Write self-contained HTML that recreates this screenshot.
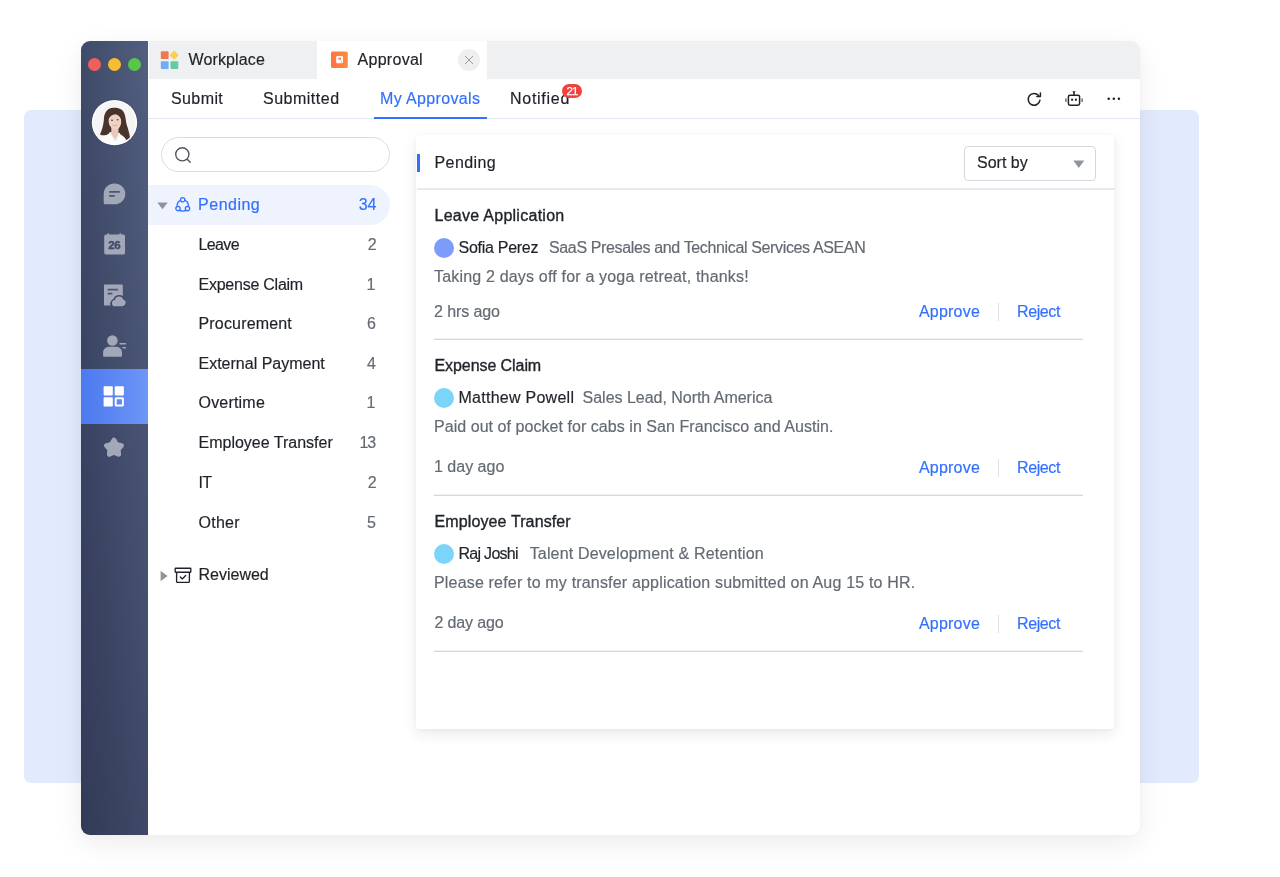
<!DOCTYPE html>
<html lang="en">
<head>
<meta charset="utf-8">
<title>Approval</title>
<style>
*{box-sizing:border-box;margin:0;padding:0}
html,body{width:1280px;height:877px;overflow:hidden;background:#fff}
body{position:relative;font-family:"Liberation Sans",sans-serif;font-size:16px;color:#1f2329;-webkit-font-smoothing:antialiased}
.abs{position:absolute}
.t{-webkit-text-stroke:.18px;position:absolute;white-space:nowrap;line-height:20px;height:20px}
#bg{left:24px;top:110px;width:1175px;height:673px;background:#e2eafe;border-radius:7px}
#win{will-change:transform;left:81px;top:41px;width:1059px;height:794px;background:#fff;border-radius:9px;box-shadow:0 9px 28px rgba(0,0,0,.075),0 0 8px rgba(0,0,0,.03);overflow:hidden}
#side{left:0;top:0;width:66.5px;height:794px;background:linear-gradient(180deg,rgba(19,24,48,0),rgba(19,24,48,.31)),linear-gradient(90deg,#3f4a69 0%,#535f80 100%)}
#tabs{left:67.5px;top:0;width:992px;height:38px;background:#eff0f1}
#tabact{left:236px;top:0;width:170px;height:38px;background:#fff}
#nav{left:66.5px;top:38px;width:993px;height:40px;background:#fff;border-bottom:1.5px solid #e3e6f0}
.r{text-align:right}
.m{-webkit-text-stroke:.36px}
.gray{color:#646a73}
.blue{color:#3370ff}
</style>
</head>
<body>
<div id="bg" class="abs"></div>
<div id="win" class="abs">
  <div id="side" class="abs">
    <div class="abs" style="left:7px;top:17px;width:13px;height:13px;border-radius:50%;background:#ee6059"></div>
    <div class="abs" style="left:27px;top:17px;width:13px;height:13px;border-radius:50%;background:#f6bd33"></div>
    <div class="abs" style="left:46.5px;top:17px;width:13px;height:13px;border-radius:50%;background:#58c649"></div>
    <svg class="abs" style="left:10px;top:58px" width="47" height="47" viewBox="0 0 47 47">
      <defs><clipPath id="avc"><circle cx="23.500" cy="23.600" r="21.300"/></clipPath></defs>
      <circle cx="23.500" cy="23.600" r="23.300" fill="#38425f" opacity=".55"/>
      <circle cx="23.500" cy="23.600" r="22.700" fill="#fff"/>
      <circle cx="23.500" cy="23.600" r="21.300" fill="#f5f5f6"/>
      <g clip-path="url(#avc)">
        <path d="M23 8.800C17 8.500 13.500 13 13 19c-.3 5-1 8-2 11-.7 2.500-1.500 4-2 5.500 2 1 5 1.300 8 0l2-2.500 10 1c.5 4 2 6.500 4 8 2.500-.5 4.500-1.500 6-3-.5-5-2-9-3.500-14-1-5-1-11-4.500-14-2-1.700-5-2.200-8-2.200z" fill="#49332a"/>
        <path d="M20.300 27h7.200v7.500l-3.300 6.500-3.900-6z" fill="#e9c8b8"/>
        <path d="M7 47c1-7 6.500-10.500 12.500-12.500l5 7.500 4-7c4.500 2 7.500 5 8.500 12z" fill="#fcfcfc"/>
        <path d="M19.500 34.500l5 7.500 4-7" fill="none" stroke="#e4e4e6" stroke-width=".7"/>
        <ellipse cx="23.900" cy="22.300" rx="6.300" ry="8.300" fill="#efd2c4" transform="rotate(-6 23.900 22.300)"/>
        <path d="M17 20.500c.5-5.500 3.500-8.300 7-8 4 .3 6.800 3.500 6.800 9-1.300-3.300-3.300-5.800-6.300-6.300-3.300 0-5.700 2.300-7.500 5.300z" fill="#49332a"/>
        <ellipse cx="21" cy="21.200" rx="1.100" ry=".7" fill="#4b362f" opacity=".85"/>
        <ellipse cx="26.600" cy="20.700" rx="1.100" ry=".7" fill="#4b362f" opacity=".85"/>
        <path d="M20.900 25.600q3.200 1.600 6-.6-2.400 4-6 .6z" fill="#c4837a"/>
        <path d="M21.800 26q2.300.8 4.300-.3-2 1.600-4.300.3z" fill="#fff"/>
      </g>
    </svg>
    <!-- chat -->
    <svg class="abs" style="left:22px;top:141.500px" width="23" height="22" viewBox="0 0 23 22">
      <path d="M11.500 0.500C17.500 0.500 22.300 5.100 22.300 10.900S17.500 21.300 11.500 21.300H2.200C1.400 21.300 0.700 20.700 0.700 19.800V10.900C0.700 5.100 5.500 0.500 11.500 0.500Z" fill="#a2a8b8"/>
      <rect x="6" y="8" width="11" height="1.800" rx=".9" fill="#4a5674"/>
      <rect x="6" y="12" width="6" height="1.800" rx=".9" fill="#4a5674"/>
    </svg>
    <!-- calendar -->
    <svg class="abs" style="left:21.800px;top:192px" width="22" height="22" viewBox="0 0 22 22">
      <path d="M4.500 0.200h1.600v1.400h10.400V0.200h1.600v1.400h2c1.100 0 2 .9 2 2v16c0 1.100-.9 2-2 2H3.200c-1.100 0-2-.9-2-2V3.600c0-1.100.9-2 2-2h1.300z" fill="#a2a8b8"/>
      <text x="11.300" y="16" text-anchor="middle" style="font-family:'Liberation Sans',sans-serif;font-weight:700;font-size:11.500px;letter-spacing:-.3px" fill="#414c69" stroke="#414c69" stroke-width=".35">26</text>
    </svg>
    <!-- doc cloud -->
    <svg class="abs" style="left:21.500px;top:242.500px" width="23" height="23" viewBox="0 0 23 23">
      <path d="M2 0.500h16.800c.6 0 1 .4 1 1v11.400a5.600 5.600 0 0 0-9 3.100 4 4 0 0 0-3.300 5.500H2c-.6 0-1-.4-1-1V1.500c0-.6.4-1 1-1z" fill="#a2a8b8"/>
      <rect x="4.600" y="4.700" width="10.500" height="1.800" rx=".5" fill="#4a5674"/>
      <rect x="4.600" y="8.700" width="4.800" height="1.800" rx=".5" fill="#4a5674"/>
      <path d="M12.300 22.300a3.100 3.100 0 0 1-.4-6.200 4.300 4.300 0 0 1 8.300-.6 3.500 3.500 0 0 1-.5 6.800z" fill="#a2a8b8" stroke="#414c69" stroke-width="3" paint-order="stroke"/>
    </svg>
    <!-- contact -->
    <svg class="abs" style="left:20.800px;top:292.800px" width="26" height="24" viewBox="0 0 26 24">
      <circle cx="10.400" cy="6.450" r="5.250" fill="#a2a8b8"/>
      <path d="M1.100 21.800v-3.300c0-3.300 2.600-5.800 5.900-5.800h7.100c3.300 0 5.900 2.500 5.900 5.800v3.300c0 .5-.4.900-.9.900H2c-.5 0-.9-.4-.9-.9z" fill="#a2a8b8"/>
      <rect x="17.300" y="9" width="6.800" height="1.500" rx=".7" fill="#a2a8b8"/>
      <rect x="20.300" y="12.900" width="3.800" height="1.500" rx=".7" fill="#a2a8b8"/>
    </svg>
    <!-- active -->
    <div class="abs" style="left:0;top:328px;width:66.500px;height:55px;background:linear-gradient(90deg,#4b79ef,#6e96f6)"></div>
    <svg class="abs" style="left:21.900px;top:345px" width="22" height="21" viewBox="0 0 22 21">
      <rect x=".6" y=".2" width="9.200" height="9.200" rx=".8" fill="#fff"/>
      <rect x="11.700" y=".2" width="9.200" height="9.200" rx=".8" fill="#fff"/>
      <rect x=".6" y="11.300" width="9.200" height="9.200" rx=".8" fill="#fff"/>
      <rect x="12.700" y="12.300" width="7.200" height="7.200" rx=".5" fill="none" stroke="#fff" stroke-width="2"/>
    </svg>
    <!-- star -->
    <svg class="abs" style="left:22.400px;top:396px" width="22" height="22" viewBox="0 0 22 22">
      <path d="M11.00 3.20L13.53 7.52L18.42 8.59L15.09 12.33L15.58 17.31L11.00 15.30L6.42 17.31L6.91 12.33L3.58 8.59L8.47 7.52z" fill="#a2a8b8" stroke="#a2a8b8" stroke-width="5" stroke-linejoin="round"/>
    </svg>
  </div>
  <div id="tabs" class="abs"></div>
  <div id="tabact" class="abs"></div>
  <!-- workplace icon -->
  <svg class="abs" style="left:79px;top:9px" width="20" height="20" viewBox="0 0 20 20">
    <rect x=".8" y="1.300" width="7.800" height="7.800" rx="1" fill="#ec7a55"/>
    <rect x="10.900" y="1.900" width="6.600" height="6.600" rx=".8" transform="rotate(45 14.200 5.200)" fill="#f8d050"/>
    <rect x=".8" y="11.300" width="7.800" height="7.800" rx="1" fill="#74abf8"/>
    <rect x="10.500" y="11.300" width="7.800" height="7.800" rx="1" fill="#66cb9f"/>
  </svg>
  <div class="t" id="t_workplace" style="left:107.5px;top:9.0px;letter-spacing:0.125px">Workplace</div>
  <!-- approval icon -->
  <svg class="abs" style="left:250px;top:10px" width="17" height="17" viewBox="0 0 17 17">
    <defs><linearGradient id="og" x1="0" y1="0" x2="1" y2="0"><stop offset="0" stop-color="#ff7340"/><stop offset="1" stop-color="#ff8b3c"/></linearGradient></defs>
    <rect x="0" y=".5" width="16.800" height="16.500" rx="1.500" fill="url(#og)"/>
    <rect x="5.200" y="5" width="6.800" height="7.200" rx="1.200" fill="#fff"/>
    <rect x="7.400" y="6.600" width="2.600" height="2.200" rx=".5" fill="#ff7f3e"/>
    <rect x="9.800" y="9.400" width="1" height="2.800" fill="#ff7f3e" opacity=".6"/>
  </svg>
  <div class="t" id="t_approval" style="left:276.5px;top:9.0px;letter-spacing:0.286px">Approval</div>
  <div class="abs" style="left:377px;top:8px;width:22px;height:22px;border-radius:50%;background:#efefef"></div>
  <svg class="abs" style="left:383px;top:14px" width="10" height="10" viewBox="0 0 10 10"><path d="M1 1l8 8M9 1l-8 8" stroke="#979aa0" stroke-width="1" fill="none"/></svg>
  <div id="nav" class="abs"></div>
  <div class="t" id="t_submit" style="left:90.0px;top:48.0px;letter-spacing:0.4px">Submit</div>
  <div class="t" id="t_submitted" style="left:182.0px;top:48.0px;letter-spacing:0.5px">Submitted</div>
  <div class="t blue" id="t_myapp" style="left:299.0px;top:48.0px;letter-spacing:0.364px">My Approvals</div>
  <div class="abs" style="left:292.500px;top:75.500px;width:113.500px;height:2px;background:#3370ff"></div>
  <div class="t" id="t_notified" style="left:429.0px;top:48.0px;letter-spacing:0.72px">Notified</div>
  <div class="abs" style="left:481.400px;top:42.500px;width:20px;height:14.500px;border-radius:7.250px;background:#f0433e;color:#fff;font-size:11.500px;line-height:15px;text-align:center;letter-spacing:-.9px;text-indent:-.9px;-webkit-text-stroke:.25px #fff">21</div>
  <!-- refresh -->
  <svg class="abs" style="left:945px;top:50px" width="17" height="17" viewBox="0 0 17 17">
    <path d="M13.910 9.320A5.900 5.900 0 1 1 12.620 4.510" fill="none" stroke="#1f2329" stroke-width="1.500" stroke-linecap="round"/>
    <path d="M10.900 5.400H14.400V1.900" fill="none" stroke="#1f2329" stroke-width="1.500" stroke-linecap="round" stroke-linejoin="round"/>
  </svg>
  <!-- robot -->
  <svg class="abs" style="left:983px;top:48px" width="20" height="18" viewBox="0 0 20 18">
    <rect x="4.400" y="6.200" width="11.200" height="10" rx="1.600" fill="none" stroke="#1f2329" stroke-width="1.500"/>
    <path d="M10 6V3" stroke="#1f2329" stroke-width="1.500"/>
    <path d="M8.300 2.200h3.400L10 4.200z" fill="#1f2329"/>
    <rect x="7.100" y="9.700" width="2" height="2" fill="#1f2329"/>
    <rect x="10.900" y="9.700" width="2" height="2" fill="#1f2329"/>
    <rect x="1.200" y="9.300" width="1.400" height="3.800" rx=".6" fill="#5f646c"/>
    <rect x="17.400" y="9.300" width="1.400" height="3.800" rx=".6" fill="#5f646c"/>
  </svg>
  <!-- dots -->
  <svg class="abs" style="left:1025px;top:55px" width="16" height="6" viewBox="0 0 16 6">
    <circle cx="2.700" cy="2.800" r="1.250" fill="#1f2329"/><circle cx="7.800" cy="2.800" r="1.250" fill="#1f2329"/><circle cx="12.900" cy="2.800" r="1.250" fill="#1f2329"/>
  </svg>
  <!-- search -->
  <div class="abs" style="left:79.500px;top:95.500px;width:229.500px;height:35.500px;border:1px solid #d9dbdf;border-radius:18px"></div>
  <svg class="abs" style="left:92.500px;top:104.500px" width="18" height="18" viewBox="0 0 18 18">
    <circle cx="8.300" cy="8.300" r="6.600" fill="none" stroke="#50555d" stroke-width="1.400"/>
    <path d="M13.200 13.200l3 3" stroke="#50555d" stroke-width="1.400" stroke-linecap="round"/>
  </svg>
  <!-- pending row -->
  <div class="abs" style="left:66.500px;top:144px;width:242.500px;height:39.500px;background:#eef3fe;border-radius:0 20px 20px 0"></div>
  <svg class="abs" style="left:75.900px;top:160.500px" width="11" height="8" viewBox="0 0 11 8"><path d="M.3.400h10.400L5.500 7.200z" fill="#8f959e"/></svg>
  <svg class="abs" style="left:93px;top:155px" width="18" height="18" viewBox="0 0 18 18">
    <g stroke="#3370ff" stroke-width="1.300">
      <circle cx="8.750" cy="9.500" r="5.700" fill="none"/>
      <circle cx="8.700" cy="3.800" r="2.150" fill="#eef3fe"/>
      <circle cx="4" cy="12.600" r="2.150" fill="#eef3fe"/>
      <circle cx="13.500" cy="12.600" r="2.150" fill="#eef3fe"/>
    </g>
  </svg>
  <div class="t blue" id="t_lpending" style="left:117.1px;top:153.5px;letter-spacing:0.483px">Pending</div>
  <div class="t blue r" id="n_pending" style="left:276.0px;width:19.500px;top:153.5px">34</div>
  <div class="t" id="t_row0" style="left:117.5px;top:193.5px;letter-spacing:-0.625px">Leave</div>
  <div class="t gray r" id="n_row0" style="left:265.7px;width:30px;top:193.5px">2</div>
  <div class="t" id="t_row1" style="left:117.5px;top:233.5px;letter-spacing:-0.242px">Expense Claim</div>
  <div class="t gray r" id="n_row1" style="left:264.5px;width:30px;top:233.5px">1</div>
  <div class="t" id="t_row2" style="left:117.5px;top:272.5px;letter-spacing:0.17px">Procurement</div>
  <div class="t gray r" id="n_row2" style="left:264.9px;width:30px;top:272.5px">6</div>
  <div class="t" id="t_row3" style="left:117.5px;top:312.5px">External Payment</div>
  <div class="t gray r" id="n_row3" style="left:265.0px;width:30px;top:312.5px">4</div>
  <div class="t" id="t_row4" style="left:117.5px;top:351.5px;letter-spacing:0.2px">Overtime</div>
  <div class="t gray r" id="n_row4" style="left:264.5px;width:30px;top:351.5px">1</div>
  <div class="t" id="t_row5" style="left:117.5px;top:391.5px">Employee Transfer</div>
  <div class="t gray r" id="n_row5" style="left:263.9px;width:30px;top:391.5px;letter-spacing:-1.2px">13</div>
  <div class="t" id="t_row6" style="left:117.5px;top:431.5px;letter-spacing:-0.7px">IT</div>
  <div class="t gray r" id="n_row6" style="left:265.7px;width:30px;top:431.5px">2</div>
  <div class="t" id="t_row7" style="left:117.5px;top:471.5px;letter-spacing:0.25px">Other</div>
  <div class="t gray r" id="n_row7" style="left:264.9px;width:30px;top:471.5px">5</div>
  <svg class="abs" style="left:78.500px;top:528.500px" width="8" height="12" viewBox="0 0 8 12"><path d="M.6.700L7.600 6 .6 11.300z" fill="#8f959e"/></svg>
  <svg class="abs" style="left:93px;top:526px" width="18" height="17" viewBox="0 0 18 17">
    <g fill="none" stroke="#1f2329" stroke-width="1.350" stroke-linejoin="round">
      <rect x="1.200" y="1.200" width="15.600" height="4" rx=".4"/>
      <path d="M2.600 5.200v9.300c0 .5.400.9.900.9h11c.5 0 .9-.4.900-.9V5.200"/>
      <path d="M6.300 9.900l2 2 3.400-3.400" stroke-linecap="round"/>
    </g>
  </svg>
  <div class="t" id="t_reviewed" style="left:117.5px;top:524.0px">Reviewed</div>
  <!-- card -->
  <div class="abs" style="left:335.300px;top:94px;width:698px;height:593.500px;background:#fff;border-radius:3px;box-shadow:0 5px 14px rgba(31,35,41,.09),0 1px 4px rgba(31,35,41,.04)"></div>
  <div class="abs" style="left:335.500px;top:113px;width:3.500px;height:18px;background:#3370ff"></div>
  <div class="t" id="t_cpending" style="left:353.5px;top:111.5px;letter-spacing:0.417px">Pending</div>
  <div class="abs" style="left:883px;top:104.500px;width:132px;height:35px;border:1px solid #d5d8dd;border-radius:4px"></div>
  <div class="t" id="t_sortby" style="left:896.0px;top:111.5px">Sort by</div>
  <svg class="abs" style="left:992px;top:118.500px" width="12" height="9" viewBox="0 0 12 9"><path d="M.3.600h11L5.800 7.900z" fill="#8f959e"/></svg>
  <div class="abs" style="left:335.500px;top:147.200px;width:698px;height:1.800px;background:#e8e9ec"></div>
  <div class="t m" id="t_title0" style="left:353.5px;top:164.5px;letter-spacing:0.269px">Leave Application</div>
  <div class="abs" style="left:353px;top:197.0px;width:20px;height:20px;border-radius:50%;background:#7d9cf9"></div>
  <div class="t" id="t_name0" style="left:377.5px;top:196.5px;letter-spacing:-0.28px">Sofia Perez</div>
  <div class="t gray" id="t_role0" style="left:468.0px;top:196.5px;letter-spacing:-0.359px">SaaS Presales and Technical Services ASEAN</div>
  <div class="t gray" id="t_msg0" style="left:353.0px;top:225.5px;letter-spacing:0.184px">Taking 2 days off for a yoga retreat, thanks!</div>
  <div class="t gray" id="t_time0" style="left:353.0px;top:260.5px;letter-spacing:-0.1px">2 hrs ago</div>
  <div class="t blue" id="t_appr0" style="left:838.0px;top:260.5px;letter-spacing:0.2px">Approve</div>
  <div class="abs" style="left:916.500px;top:262.2px;width:1px;height:17.500px;background:#dee0e3"></div>
  <div class="t blue" id="t_rej0" style="left:936.0px;top:260.5px;letter-spacing:-0.4px">Reject</div>
  <div class="abs" style="left:353px;top:297px;width:649px;height:2px;background:linear-gradient(180deg,#f0f0f3 0,#f0f0f3 50%,#d7d8df 50%,#d7d8df 100%)"></div>
  <div class="t m" id="t_title1" style="left:353.5px;top:314.5px;letter-spacing:-0.075px">Expense Claim</div>
  <div class="abs" style="left:353px;top:347px;width:20px;height:20px;border-radius:50%;background:#7bd5fa"></div>
  <div class="t" id="t_name1" style="left:377.5px;top:346.5px;letter-spacing:0.261px">Matthew Powell</div>
  <div class="t gray" id="t_role1" style="left:501.6px;top:346.5px;letter-spacing:-0.025px">Sales Lead, North America</div>
  <div class="t gray" id="t_msg1" style="left:353.0px;top:375.5px;letter-spacing:0.051px">Paid out of pocket for cabs in San Francisco and Austin.</div>
  <div class="t gray" id="t_time1" style="left:353.0px;top:416.0px">1 day ago</div>
  <div class="t blue" id="t_appr1" style="left:838.0px;top:416.6px;letter-spacing:0.2px">Approve</div>
  <div class="abs" style="left:916.500px;top:418.0px;width:1px;height:17.500px;background:#dee0e3"></div>
  <div class="t blue" id="t_rej1" style="left:936.0px;top:416.6px;letter-spacing:-0.4px">Reject</div>
  <div class="abs" style="left:353px;top:453px;width:649px;height:2px;background:linear-gradient(180deg,#f0f0f3 0,#f0f0f3 50%,#d7d8df 50%,#d7d8df 100%)"></div>
  <div class="t m" id="t_title2" style="left:353.5px;top:470.5px;letter-spacing:0.119px">Employee Transfer</div>
  <div class="abs" style="left:353px;top:503px;width:20px;height:20px;border-radius:50%;background:#7bd5fa"></div>
  <div class="t" id="t_name2" style="left:377.5px;top:502.5px;letter-spacing:-0.713px">Raj Joshi</div>
  <div class="t gray" id="t_role2" style="left:448.7px;top:502.5px;letter-spacing:0.159px">Talent Development &amp; Retention</div>
  <div class="t gray" id="t_msg2" style="left:353.0px;top:531.5px;letter-spacing:0.178px">Please refer to my transfer application submitted on Aug 15 to HR.</div>
  <div class="t gray" id="t_time2" style="left:353.6px;top:572.0px;letter-spacing:-0.163px">2 day ago</div>
  <div class="t blue" id="t_appr2" style="left:838.0px;top:572.6px;letter-spacing:0.2px">Approve</div>
  <div class="abs" style="left:916.500px;top:574.0px;width:1px;height:17.500px;background:#dee0e3"></div>
  <div class="t blue" id="t_rej2" style="left:936.0px;top:572.6px;letter-spacing:-0.4px">Reject</div>
  <div class="abs" style="left:353px;top:609px;width:649px;height:2px;background:linear-gradient(180deg,#f0f0f3 0,#f0f0f3 50%,#d7d8df 50%,#d7d8df 100%)"></div>
</div>
</body>
</html>
